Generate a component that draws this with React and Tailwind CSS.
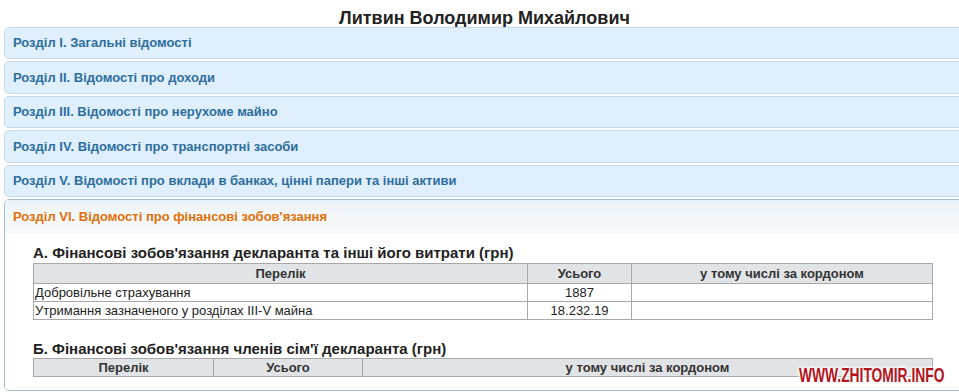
import React from "react";

const sections = [
  "Розділ I. Загальні відомості",
  "Розділ II. Відомості про доходи",
  "Розділ III. Відомості про нерухоме майно",
  "Розділ IV. Відомості про транспортні засоби",
  "Розділ V. Відомості про вклади в банках, цінні папери та інші активи",
];

const Header = ({ title }) => (
  <div className="h-[32.4px] flex items-center pl-[8px] border border-[#c5dbec] rounded-[5px] bg-[#dfeffc] text-[#2e6e9e] text-[13px] font-bold">
    {title}
  </div>
);

const th = "border border-[#a8a8a8] bg-[#e1e4e6] font-bold text-[#333] text-center";
const td = "border border-[#a8a8a8] text-[#222]";

export default function App() {
  return (
    <div className="relative w-[959px] h-[392px] overflow-hidden bg-white font-['Liberation_Sans',Arial,sans-serif]">
      <div className="ml-[4px] w-[961px]">
        <h1 className="pt-[10px] h-[27px] leading-[17px] text-center text-[18px] font-bold text-[#222]">
          Литвин Володимир Михайлович
        </h1>
        <div className="flex flex-col gap-[2px] w-[980px]">
          {sections.map((s) => (
            <Header key={s} title={s} />
          ))}
          <div className="border border-[#a6c0d3] rounded-[5px] overflow-hidden">
            <div className="h-[33px] flex items-center pl-[8px] bg-[linear-gradient(to_bottom,#e9f2fa,#f3f7fa_45%,#f7f9fa)] text-[#e17009] text-[13px] font-bold">
              Розділ VI. Відомості про фінансові зобов'язання
            </div>
            <div className="bg-white pl-[28px] pt-[11px] pb-[13px]">
              <h2 className="text-[15px] leading-[18px] font-bold text-[#222] mb-[1px]">
                А. Фінансові зобов'язання декларанта та інші його витрати (грн)
              </h2>
              <table className="border-collapse w-[900px] text-[13px] leading-[15px]">
                <thead>
                  <tr className="h-[20px]">
                    <th className={`${th} w-[494px]`}>Перелік</th>
                    <th className={`${th} w-[104px]`}>Усього</th>
                    <th className={th}>у тому числі за кордоном</th>
                  </tr>
                </thead>
                <tbody>
                  <tr className="h-[18px]">
                    <td className={`${td} pl-[1px]`}>Добровільне страхування</td>
                    <td className={`${td} text-center`}>1887</td>
                    <td className={td}></td>
                  </tr>
                  <tr className="h-[18px]">
                    <td className={`${td} pl-[1px]`}>Утримання зазначеного у розділах III-V майна</td>
                    <td className={`${td} text-center`}>18.232.19</td>
                    <td className={td}></td>
                  </tr>
                </tbody>
              </table>
              <h2 className="mt-[20px] text-[15px] leading-[18px] font-bold text-[#222]">
                Б. Фінансові зобов'язання членів сім'ї декларанта (грн)
              </h2>
              <table className="border-collapse w-[900px] text-[13px] leading-[15px]">
                <thead>
                  <tr className="h-[18px]">
                    <th className={`${th} w-[180px]`}>Перелік</th>
                    <th className={`${th} w-[149px]`}>Усього</th>
                    <th className={th}>у тому числі за кордоном</th>
                  </tr>
                </thead>
              </table>
            </div>
          </div>
        </div>
      </div>
      <div className="absolute left-[799px] top-[364px] whitespace-nowrap origin-left scale-x-[0.69] text-[20px] leading-[22px] font-bold text-[#b3141c] [text-shadow:0_0_3px_#fff,0_0_3px_#fff,0_0_4px_#fff,0_0_5px_#fff]">
        WWW.ZHITOMIR.INFO
      </div>
    </div>
  );
}
